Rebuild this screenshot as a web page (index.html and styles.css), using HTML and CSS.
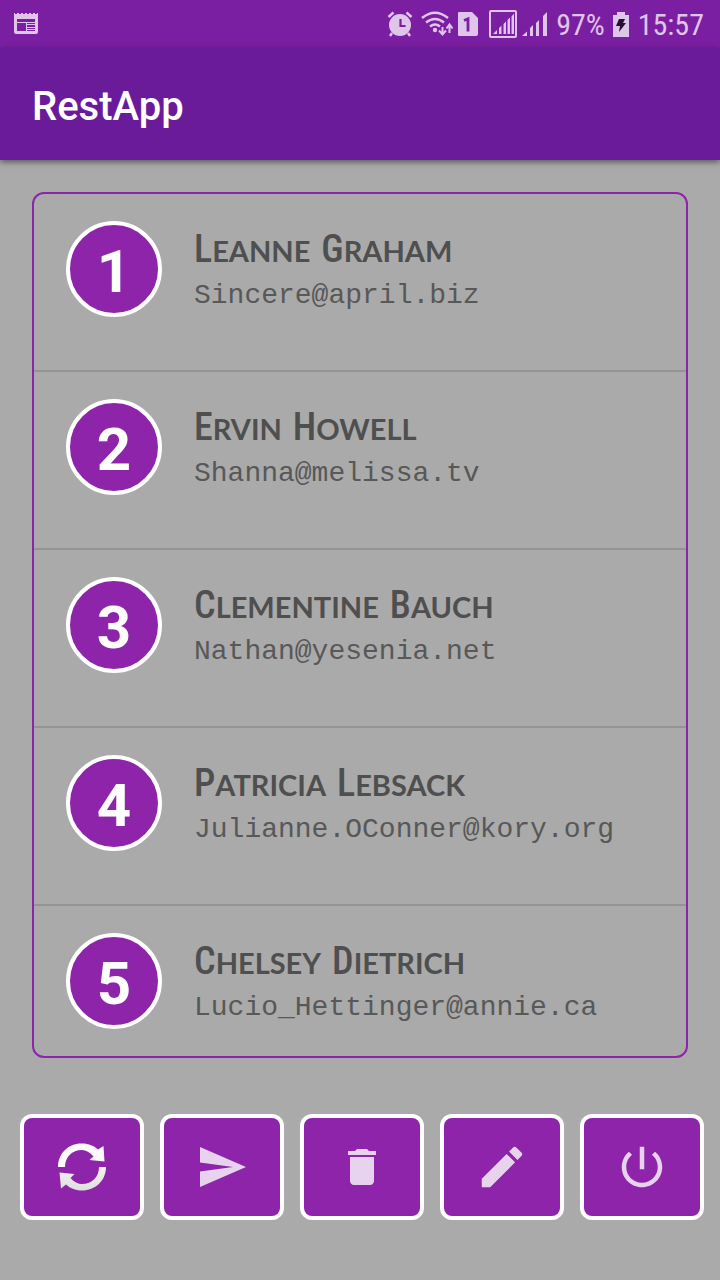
FILE: index.html
```html
<!DOCTYPE html>
<html lang="en">
<head>
<meta charset="utf-8">
<meta name="viewport" content="width=device-width, initial-scale=1">
<title>RestApp</title>
<link rel="stylesheet" href="styles.css">
</head>
<body>
<div class="app">
  <div class="status">
    <svg class="status-note" width="24" height="24" viewBox="0 0 24 24" aria-hidden="true">
      <path fill="currentColor" fill-rule="evenodd" d="M0 1h1v1h2V1h2v1h2V1h2v1h2V1h2v1h2V1h2v1h2V1h2v1h2V1h1v19a2 2 0 0 1-2 2H2a2 2 0 0 1-2-2zM3 7h18v3H3zM3 11h9v8H3zM13 11h8v1h-8zM13 13h8v2h-8zM13 16h8v1h-8zM13 18h8v1h-8z"/>
    </svg>
    <div class="status-icons">
      <svg width="26" height="26" viewBox="0 0 26 26" aria-hidden="true">
        <circle cx="13" cy="14" r="11" fill="currentColor"/>
        <path d="M1.500 6 6.500 1.500M24.500 6 19.500 1.500M5 22l-2 3M21 22l2 3" fill="none" stroke="currentColor" stroke-width="2.500"/>
        <path d="M13.500 8v7h5" fill="none" stroke="#7b1fa2" stroke-width="2.200"/>
      </svg>
      <svg class="status-wifi" width="32" height="26" viewBox="0 0 32 26" aria-hidden="true">
        <g fill="none" stroke="currentColor" stroke-width="2.500">
          <path d="M1 7Q14-3.500 27 7M5 11.500q9-7 18 0M9 15.500q5-4 10 0"/>
          <path stroke-width="2" d="M21.500 16v7M18 19.500l3.500 4 3.500-4M28.500 22v-8M25.500 17.500l3-4 3 4"/>
        </g>
        <circle cx="14" cy="19" r="2.200" fill="currentColor"/>
      </svg>
      <svg class="status-sim" width="22" height="26" viewBox="0 0 22 26" aria-hidden="true">
        <path fill="currentColor" d="M2 1h13l6 6v16a2 2 0 0 1-2 2H2a1.500 1.500 0 0 1-1-2V2a1 1 0 0 1 1-1z"/>
        <path d="M7 9.500l4-1.700v12.700" fill="none" stroke="#7b1fa2" stroke-width="2.800"/>
      </svg>
      <svg class="status-signal" width="30" height="30" viewBox="0 0 30 30" aria-hidden="true">
        <rect x="2" y="2" width="26" height="26" rx="1" fill="none" stroke="currentColor" stroke-width="2"/>
        <path fill="currentColor" d="M5 25l4-4V25zM11 25v-6l2.500-2.500V25zM15.500 25v-10l2.500-2.500V25zM19.500 25V11l2.500-2.500V25zM23.500 25V7.500l2.500-3V25z"/>
      </svg>
      <svg class="status-signal-b" width="26" height="26" viewBox="0 0 26 26" aria-hidden="true">
        <path fill="currentColor" d="M0 25l5-4.500V25zM8 25v-8l3-3v11zM14 25V12l3-3v16zM21 25V5l4-4v24z"/>
      </svg>
      <span class="status-text">97%</span>
      <svg class="status-battery" width="16" height="25" viewBox="0 0 16 25" aria-hidden="true">
        <path fill="currentColor" d="M4 0h8v3h4v22H0V3h4z"/>
        <path fill="#22122c" d="M6 7h6l-2 4h3l-7 9 1-6H3z"/>
      </svg>
      <time class="status-text">15:57</time>
    </div>
  </div>
  <header class="appbar"><h1 class="title">RestApp</h1></header>
  <main class="content">
    <ul class="users">
      <li class="user"><span class="badge">1</span><div class="info"><h2 class="name"><span class="word">Leanne</span> <span class="word">Graham</span></h2><p class="email">Sincere@april.biz</p></div></li>
      <li class="user"><span class="badge">2</span><div class="info"><h2 class="name"><span class="word">Ervin</span> <span class="word">Howell</span></h2><p class="email">Shanna@melissa.tv</p></div></li>
      <li class="user"><span class="badge">3</span><div class="info"><h2 class="name"><span class="word">Clementine</span> <span class="word">Bauch</span></h2><p class="email">Nathan@yesenia.net</p></div></li>
      <li class="user"><span class="badge">4</span><div class="info"><h2 class="name"><span class="word">Patricia</span> <span class="word">Lebsack</span></h2><p class="email">Julianne.OConner@kory.org</p></div></li>
      <li class="user"><span class="badge">5</span><div class="info"><h2 class="name"><span class="word">Chelsey</span> <span class="word">Dietrich</span></h2><p class="email">Lucio_Hettinger@annie.ca</p></div></li>
    </ul>
  </main>
  <nav class="actions">
    <button class="action" type="button" aria-label="Refresh">
      <svg width="56" height="56" viewBox="0 0 56 56" aria-hidden="true">
        <defs><linearGradient id="silver" x1="0" y1="0" x2="0" y2="1"><stop offset="0" stop-color="#f4f4f4"/><stop offset="1" stop-color="#dedede"/></linearGradient></defs>
        <path fill="#fafafa" d="M4 28C4 14 15 4 28 4.500c7 0 12 2.500 16 6L49.500 7l1 15.500-15-1.500 4-3.500C36 13.500 32 11 28 11c-10 0-17 7-17 17z"/>
        <path fill="url(#silver)" d="M52 28C52 42 41 51.500 28 51.500c-7 0-12-2.500-16-6L7 49.500 5.500 33.500l15 1.500-4 4C20 43 24 45 28 45c10 0 17-7 17-17z"/>
      </svg>
    </button>
    <button class="action" type="button" aria-label="Send">
      <svg width="48" height="48" viewBox="0 0 24 24" aria-hidden="true"><path fill="currentColor" d="M1 22l23-10L1 2v7.700L17.500 12 1 14.300z"/></svg>
    </button>
    <button class="action" type="button" aria-label="Delete">
      <svg width="48" height="48" viewBox="0 0 24 24" aria-hidden="true"><path fill="currentColor" d="M6 19c0 1.100.9 2 2 2h8c1.100 0 2-.9 2-2V7H6v12zM19 4h-3.500l-1-1h-5l-1 1H5v2h14V4z"/></svg>
    </button>
    <button class="action" type="button" aria-label="Edit">
      <svg width="54" height="54" viewBox="0 0 24 24" aria-hidden="true"><path fill="currentColor" d="M3 17.250V21h3.750L17.810 9.940l-3.750-3.750L3 17.250zM20.710 7.040c.39-.39.39-1.020 0-1.410l-2.340-2.340c-.39-.39-1.020-.39-1.410 0l-1.830 1.830 3.750 3.750 1.830-1.830z"/></svg>
    </button>
    <button class="action" type="button" aria-label="Power">
      <svg width="54" height="54" viewBox="0 0 24 24" aria-hidden="true"><path fill="currentColor" d="M13 3h-2v10h2V3zm4.830 2.170l-1.420 1.420C17.990 7.860 19 9.810 19 12c0 3.870-3.130 7-7 7s-7-3.130-7-7c0-2.190 1.010-4.140 2.580-5.420L6.170 5.170C4.230 6.820 3 9.260 3 12c0 4.970 4.030 9 9 9s9-4.030 9-9c0-2.740-1.230-5.180-3.170-6.830z"/></svg>
    </button>
  </nav>
</div>
</body>
</html>
```
FILE: styles.css
```css
* { box-sizing: border-box; }
body { margin: 0; background: #aaa; font-family: Roboto, sans-serif; }
h1, h2, p, ul { margin: 0; padding: 0; }
svg { display: block; flex: none; }

.app { display: flex; flex-direction: column; height: 100vh; }

.status {
  display: flex;
  justify-content: space-between;
  align-items: center;
  height: 48px;
  padding: 0 16px 0 14px;
  background: #7b1fa2;
  color: #dfc5ea;
}
.status-icons { display: flex; align-items: center; }
.status-wifi { margin-left: 8px; }
.status-sim { margin-left: 4px; }
.status-signal { margin-left: 9px; }
.status-signal-b { margin: 0 8px 0 4px; }
.status-battery { margin: 0 9px 0 8px; }
.status-text {
  font-family: "Roboto Condensed", "Liberation Sans Narrow", Roboto, sans-serif;
  font-size: 30px;
  line-height: 48px;
  padding-top: 2px;
}

.appbar {
  display: flex;
  align-items: center;
  height: 112px;
  padding: 6px 32px 0;
  background: #6a1b9a;
  box-shadow: 0 2px 6px rgba(0, 0, 0, .5);
}
.title { color: #fff; font-size: 40px; line-height: 48px; font-weight: 500; }

.content {
  display: flex;
  flex: 1;
  min-height: 0;
  padding: 32px 32px 0;
}
.users {
  flex: 1;
  overflow-y: auto;
  scrollbar-width: none;
  list-style: none;
  border: 2px solid #8e24aa;
  border-radius: 12px;
}
.user {
  display: flex;
  gap: 32px;
  height: 178px;
  padding: 27px 32px 0;
  border-bottom: 2px solid #949494;
}
.user:last-child { border-bottom: 0; }
.badge {
  flex: none;
  width: 96px;
  height: 96px;
  border: 4px solid #fff;
  border-radius: 50%;
  background: #8e24aa;
  color: #fff;
  font-size: 60px;
  line-height: 94px;
  font-weight: 700;
  text-align: center;
}
.info { padding-top: 4px; color: #4f4f4f; }
.name {
  display: flex;
  flex-wrap: wrap;
  column-gap: 11px;
  font-family: Lato, sans-serif;
  font-size: 29px;
  line-height: 48px;
  font-weight: 700;
  text-transform: uppercase;
}
.word::first-letter {
  font-family: "Roboto Condensed", Roboto, sans-serif;
  font-size: 38px;
  font-weight: 500;
  line-height: 48px;
}
.email {
  color: #585858;
  font-family: "Liberation Mono", monospace;
  font-size: 28px;
  line-height: 42px;
}

.actions {
  display: grid;
  grid-template-columns: repeat(5, 1fr);
  gap: 16px;
  padding: 56px 16px 60px 20px;
}
.action {
  display: flex;
  align-items: center;
  justify-content: center;
  height: 106px;
  padding: 0;
  border: 4px solid #fff;
  border-radius: 12px;
  background: #8e24aa;
  color: #e8d3ee;
}
```
